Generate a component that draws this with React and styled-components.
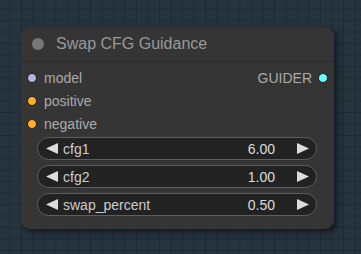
import React from "react";
import styled, { createGlobalStyle } from "styled-components";

const GlobalStyle = createGlobalStyle`
  html, body {
    margin: 0;
    padding: 0;
    background: #25333f;
  }
  body {
    font-family: "Liberation Sans", Arial, sans-serif;
  }
`;

const Canvas = styled.div`
  width: 361px;
  height: 254px;
  box-sizing: border-box;
  padding: 27px 0 0 21px;
  overflow: hidden;
  background-color: #26343f;
  background-image:
    linear-gradient(to right, rgba(16, 26, 34, 0.35) 1px, transparent 1px),
    linear-gradient(to bottom, rgba(16, 26, 34, 0.35) 1px, transparent 1px);
  background-size: 11.5px 11.5px;
  background-position: -2px -3px;
`;

const Node = styled.div`
  width: 313px;
  height: 202px;
  background: #353535;
  border-radius: 9px;
  box-shadow: 3px 3px 6px rgba(0, 0, 0, 0.55);
  display: flex;
  flex-direction: column;
`;

const Title = styled.div`
  height: 34px;
  display: flex;
  align-items: center;
  gap: 12px;
  padding-left: 11px;
  border-bottom: 1px solid #2b2b2b;
  color: #999;
  font-size: 16px;
`;

const TitleDot = styled.span`
  width: 12px;
  height: 12px;
  border-radius: 50%;
  background: #777;
`;

const Slots = styled.div`
  padding-top: 4px;
  display: flex;
  flex-direction: column;
`;

const SlotRow = styled.div`
  height: 23px;
  display: flex;
  align-items: center;
  justify-content: space-between;
  padding: 0 6px;
  font-size: 14px;
  color: #aaa;
`;

const Slot = styled.div`
  display: flex;
  align-items: center;
  gap: ${(p) => (p.$out ? "6px" : "7px")};
  flex-direction: ${(p) => (p.$out ? "row-reverse" : "row")};
`;

const Dot = styled.span`
  box-sizing: border-box;
  width: 10px;
  height: 10px;
  border-radius: 50%;
  border: 1.5px solid #1c1c1c;
  background: ${(p) => p.$color};
`;

const Widgets = styled.div`
  padding: 2px 17px 0 16px;
  display: flex;
  flex-direction: column;
  gap: 5px;
`;

const Widget = styled.div`
  height: 21px;
  border: 1px solid #5e5e5e;
  border-radius: 12px;
  background: #222;
  display: flex;
  align-items: center;
  padding: 0 7px 0 8px;
  font-size: 14px;
  color: #ccc;
`;

const Label = styled.span`
  flex: 1;
  margin-left: 5px;
`;

const Value = styled.span`
  color: #ddd;
  margin-right: 22px;
`;

const Arrow = ({ right }) => (
  <svg width="12" height="11" viewBox="0 0 12 11">
    <polygon
      points={right ? "0,0 12,5.5 0,11" : "12,0 0,5.5 12,11"}
      fill="#ddd"
    />
  </svg>
);

const inputs = [
  { name: "model", color: "#b4b4e6" },
  { name: "positive", color: "#ffb12e" },
  { name: "negative", color: "#ffb12e" },
];

const widgets = [
  { name: "cfg1", value: "6.00" },
  { name: "cfg2", value: "1.00" },
  { name: "swap_percent", value: "0.50" },
];

export default function App() {
  return (
    <Canvas>
      <GlobalStyle />
      <Node>
        <Title>
          <TitleDot />
          Swap CFG Guidance
        </Title>
        <Slots>
          {inputs.map((s, i) => (
            <SlotRow key={s.name}>
              <Slot>
                <Dot $color={s.color} />
                {s.name}
              </Slot>
              {i === 0 && (
                <Slot $out>
                  <Dot $color="#66ffff" />
                  GUIDER
                </Slot>
              )}
            </SlotRow>
          ))}
        </Slots>
        <Widgets>
          {widgets.map((w) => (
            <Widget key={w.name}>
              <Arrow />
              <Label>{w.name}</Label>
              <Value>{w.value}</Value>
              <Arrow right />
            </Widget>
          ))}
        </Widgets>
      </Node>
    </Canvas>
  );
}
